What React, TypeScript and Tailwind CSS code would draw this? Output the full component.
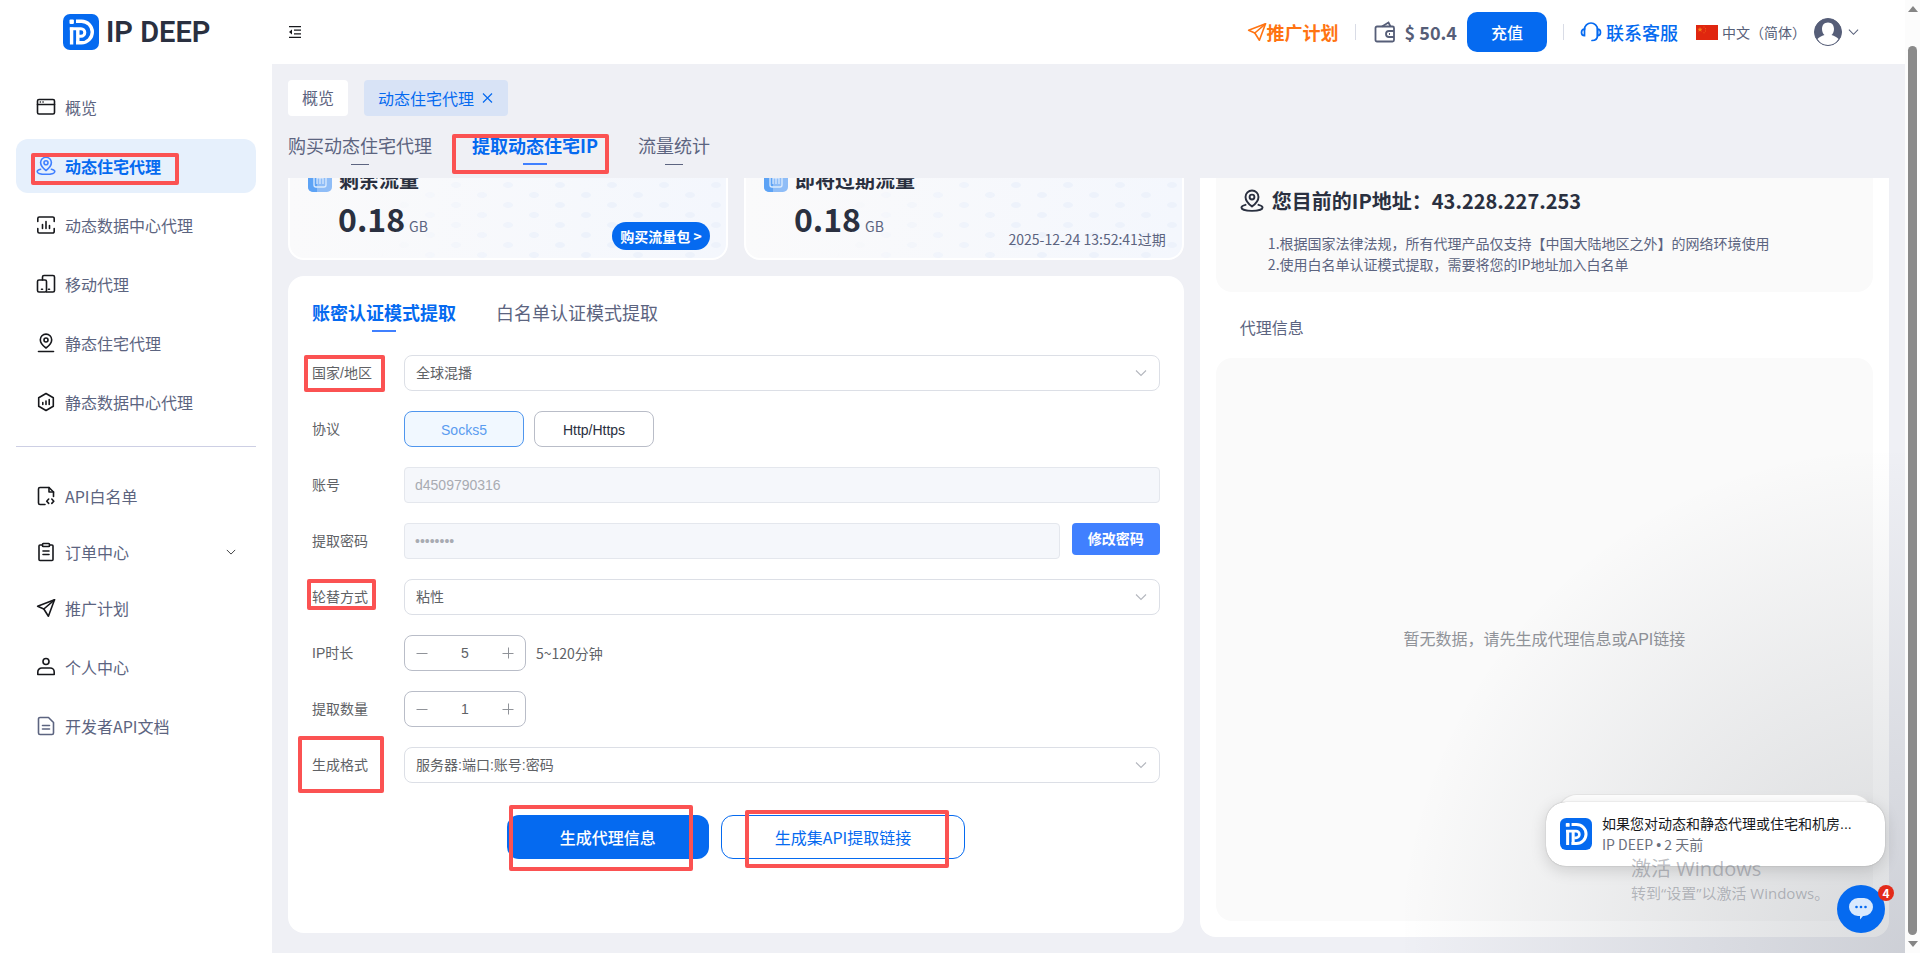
import { useState } from "react";
import type { ReactNode } from "react";

type IconProps = { className?: string };

type NavItem = {
  name: string;
  icon: ReactNode;
  active?: boolean;
  children?: boolean;
};

function LogoMark({ className }: IconProps) {
  return (
    <svg viewBox="0 0 36 36" className={className} fill="none" aria-hidden="true">
      <rect width="36" height="36" rx="7" fill="#056af0" />
      <rect x="6.500" y="5.500" width="4.400" height="4.400" rx="1" fill="#fff" />
      <path d="M13 7.200h5.500a10.800 10.800 0 0 1 0 21.600H13" stroke="#fff" strokeWidth="3.400" />
      <path d="M6.800 14.700H18a3.800 3.800 0 0 1 0 7.600h-2" stroke="#fff" strokeWidth="3" />
      <path d="M8.600 13.500v17M14.800 14v16" stroke="#fff" strokeWidth="3.400" />
    </svg>
  );
}

function Icon({ children, className = "size-5" }: { children: ReactNode; className?: string }) {
  return (
    <svg
      viewBox="0 0 20 20"
      className={className}
      fill="none"
      stroke="currentColor"
      strokeWidth="1.6"
      strokeLinecap="round"
      strokeLinejoin="round"
      aria-hidden="true"
    >
      {children}
    </svg>
  );
}

function PinIcon({ className }: IconProps) {
  return (
    <Icon className={className}>
      <path d="M10 14.500S4.600 10.600 4.600 6.600a5.400 5.400 0 0 1 10.800 0c0 4-5.400 7.900-5.400 7.900Z" />
      <circle cx="10" cy="6.700" r="2" />
      <path d="M4.600 13.200c-2.200.5-3.400 1.300-3.400 2.200 0 1.700 3.900 2.800 8.800 2.800s8.800-1.100 8.800-2.800c0-.9-1.200-1.700-3.400-2.200" />
    </Icon>
  );
}

function PlaneIcon({ className }: IconProps) {
  return (
    <Icon className={className}>
      <path d="M18.500 1.800 1.600 8.300l6.200 2.700 4.600 7.200Z" />
      <path d="M18.500 1.800 7.800 11" />
    </Icon>
  );
}

function Chevron({ className = "h-2 w-3" }: IconProps) {
  return (
    <svg viewBox="0 0 12 8" className={className} fill="none" stroke="currentColor" strokeWidth="1.100" aria-hidden="true">
      <path d="m1 1.500 5 5 5-5" />
    </svg>
  );
}

// red frame that highlights a step of the tutorial
function Mark({ className }: { className: string }) {
  return <span className={`pointer-events-none absolute z-10 rounded-[2px] border-4 border-[#fb5252] ${className}`} />;
}

const mainNav: NavItem[] = [
  {
    name: "概览",
    icon: (
      <Icon>
        <rect x="1.500" y="2.500" width="17" height="14.500" rx="1.500" />
        <path d="M1.500 7.500h17M4.300 5h.1M7 5h.1" />
      </Icon>
    ),
  },
  { name: "动态住宅代理", icon: <PinIcon className="size-5" />, active: true },
  {
    name: "动态数据中心代理",
    icon: (
      <Icon>
        <path d="M1.800 6.500v-3a1.500 1.500 0 0 1 1.500-1.500h13.400a1.500 1.500 0 0 1 1.500 1.500v3M1.800 13.500v3A1.500 1.500 0 0 0 3.300 18h13.400a1.500 1.500 0 0 0 1.500-1.500v-3M6.500 9.500v4M10 6.500v7M13.500 10.500v3" />
      </Icon>
    ),
  },
  {
    name: "移动代理",
    icon: (
      <Icon>
        <path d="M6.500 6V3A1.500 1.500 0 0 1 8 1.500h9A1.500 1.500 0 0 1 18.500 3v13.500A1.500 1.500 0 0 1 17 18h-6.500" />
        <rect x="1.500" y="6" width="9" height="12" rx="1.500" />
        <path d="M5.500 15.200h1M12.500 15.200h1" />
      </Icon>
    ),
  },
  {
    name: "静态住宅代理",
    icon: (
      <Icon>
        <path d="M10 15S4.300 11 4.300 6.800a5.700 5.700 0 0 1 11.400 0C15.700 11 10 15 10 15Z" />
        <circle cx="10" cy="7" r="2" />
        <path d="M2.500 18.500h15" />
      </Icon>
    ),
  },
  {
    name: "静态数据中心代理",
    icon: (
      <Icon>
        <path d="m10 1.500 7.300 4.200v8.600L10 18.500l-7.300-4.200V5.700Z" />
        <path d="M6.800 10.500v2M10 9v3.500M13.200 7.500v5" />
      </Icon>
    ),
  },
];

const subNav: NavItem[] = [
  {
    name: "API白名单",
    icon: (
      <Icon>
        <path d="M9 18.500H4A1.500 1.500 0 0 1 2.500 17V3A1.500 1.500 0 0 1 4 1.500h9L17.500 6v4.500" />
        <path d="M13 1.500V6h4.500M12.700 13l-2 2.200 2 2.200M15.800 13l2 2.200-2 2.200" />
      </Icon>
    ),
  },
  {
    name: "订单中心",
    children: true,
    icon: (
      <Icon>
        <path d="M6.500 3H4a1 1 0 0 0-1 1v13.500a1 1 0 0 0 1 1h12a1 1 0 0 0 1-1V4a1 1 0 0 0-1-1h-2.500" />
        <rect x="6.500" y="1.500" width="7" height="3" rx=".8" />
        <path d="M7 9h6M7 12.500h6" />
      </Icon>
    ),
  },
  { name: "推广计划", icon: <PlaneIcon className="size-5" /> },
  {
    name: "个人中心",
    icon: (
      <Icon>
        <circle cx="10" cy="4.500" r="3" />
        <path d="M1.800 17.500v-2.500a4 4 0 0 1 4-4h8.400a4 4 0 0 1 4 4v2.500Z" />
      </Icon>
    ),
  },
  {
    name: "开发者API文档",
    icon: (
      <Icon className="size-5 text-[#5c6480]">
        <path d="M12.500 1.500H4A1.500 1.500 0 0 0 2.500 3v14A1.500 1.500 0 0 0 4 18.500h12a1.500 1.500 0 0 0 1.500-1.500V6.500Z" />
        <path d="M6.500 9.500h7M6.500 13h7" />
      </Icon>
    ),
  },
];

function NavLink({ item }: { item: NavItem }) {
  return (
    <a
      href="#"
      className={`relative flex items-center rounded-xl px-5 text-base ${item.children ? "h-12" : "h-[54px]"} ${
        item.active ? "bg-[#e6f0fc] font-bold text-[#056af0]" : "text-[#5c6480]"
      }`}
    >
      <span className={item.active ? "text-[#4080ff]" : "text-[#17181c]"}>{item.icon}</span>
      <span className="ml-[9px]">{item.name}</span>
      {item.children && <Chevron className="ml-auto h-2 w-[10px] text-[#303133]" />}
      {item.active && <Mark className="top-[14px] left-[15px] h-8 w-[148px]" />}
    </a>
  );
}

function Sidebar() {
  return (
    <aside className="flex w-[272px] shrink-0 flex-col bg-white px-4">
      <a href="#" className="flex h-16 items-center gap-[7px] pl-[47px]">
        <LogoMark className="size-9" />
        <span className="font-['Roboto',sans-serif] text-[29px] leading-9 font-semibold text-[#2a3040]">IP DEEP</span>
      </a>
      <nav className="mt-4 flex flex-col gap-[5px]">
        {mainNav.map((item) => (
          <NavLink key={item.name} item={item} />
        ))}
      </nav>
      <hr className="mt-[17px] mb-[22px] border-[#cdcfe4]" />
      <nav className="flex flex-col gap-[5px]">
        {subNav.map((item) => (
          <NavLink key={item.name} item={item} />
        ))}
      </nav>
    </aside>
  );
}

function Header() {
  return (
    <header className="flex h-16 shrink-0 items-center bg-white pr-[46px] pl-4">
      <button type="button" aria-label="收起菜单" className="text-[#17181c]">
        <svg viewBox="0 0 14 14" className="size-[14px]" fill="none" stroke="currentColor" strokeWidth="1.200">
          <path d="M1 1.600h12M6 5.200h7M6 8.800h7M1 12.400h12" />
          <path d="M4 4.600v4.800L1 7Z" fill="currentColor" stroke="none" />
        </svg>
      </button>
      <a href="#" className="ml-auto flex items-center text-lg font-bold text-[#ff7412]">
        <PlaneIcon className="size-5" />
        推广计划
      </a>
      <span className="mr-[18px] ml-4 h-4 w-px bg-[#d9dce6]" />
      <svg viewBox="0 0 22 22" className="size-[22px] text-[#565e78]" fill="none" stroke="currentColor" strokeWidth="1.800" aria-hidden="true">
        <rect x="1.500" y="5.500" width="18.500" height="15" rx="1.500" />
        <path d="m8 5.500 6.500-4 2 4M20 10h-5a3 3 0 0 0 0 6h5M15 13h1" />
      </svg>
      <span className="ml-[9px] text-lg font-bold text-[#565e78]">$ 50.4</span>
      <button type="button" className="ml-[10px] h-10 w-20 rounded-[10px] bg-[#056af0] text-base font-medium text-white">
        充值
      </button>
      <span className="mx-4 h-4 w-px bg-[#d9dce6]" />
      <a href="#" className="flex items-center gap-1 text-lg font-medium text-[#056af0]">
        <svg viewBox="0 0 22 22" className="size-[22px]" fill="none" stroke="currentColor" strokeWidth="1.700" strokeLinecap="round" aria-hidden="true">
          <path d="M4.500 8.500a6.500 6.500 0 0 1 13 0v6c0 3-2 5-5.500 5" />
          <path d="M4.500 8.200c-2 0-3 1.300-3 3.200s1 3.200 3 3.200ZM17.500 8.200c2 0 3 1.300 3 3.200s-1 3.200-3 3.200Z" />
        </svg>
        联系客服
      </a>
      <button type="button" className="ml-[18px] flex items-center gap-1 text-sm text-[#565e78]">
        <svg viewBox="0 0 22 15" className="h-[15px] w-[22px]" aria-hidden="true">
          <rect width="22" height="15" fill="#e0260f" />
          <path d="m4 2 .7 1.700 1.800.1-1.400 1.200.5 1.800L4 5.800 2.400 6.800l.5-1.800L1.500 3.800l1.800-.1Z" fill="#f5801a" />
          <path d="M7.500 1.500h1v1h-1zM9 3.200h1v1H9zM9 5.500h1v1H9zM7.500 7.200h1v1h-1z" fill="#f0601a" />
        </svg>
        中文（简体）
      </button>
      <button type="button" aria-label="账户" className="ml-2 flex items-center gap-[6px] text-[#565e78]">
        <svg viewBox="0 0 28 28" className="size-7" aria-hidden="true">
          <circle cx="14" cy="14" r="13.500" fill="#565e78" stroke="#565e78" />
          <path d="M14 4.500c-3.900 0-6 2.800-6 6.500 0 2.600 1 4.800 2.500 6-3 1-5.500 2.300-7 4A13 13 0 0 0 14 27a13 13 0 0 0 10.500-6c-1.500-1.700-4-3-7-4 1.500-1.200 2.500-3.400 2.500-6 0-3.700-2.100-6.500-6-6.500Z" fill="#fff" />
        </svg>
        <Chevron className="h-2 w-[11px]" />
      </button>
    </header>
  );
}

function PageTabs() {
  return (
    <>
      <div className="flex gap-4 pt-4 text-base">
        <a href="#" className="flex h-9 items-center rounded bg-white px-[14px] pb-[2px] text-[#5c6480]">
          概览
        </a>
        <div className="flex h-9 items-center gap-2 rounded bg-[#d8e3f6] px-[14px] text-[#056af0]">
          <a href="#">动态住宅代理</a>
          <button type="button" aria-label="关闭">
            <svg viewBox="0 0 12 10" className="h-[10px] w-3" fill="none" stroke="currentColor" strokeWidth="1.200">
              <path d="m1 .5 9 9M10 .5l-9 9" />
            </svg>
          </button>
        </div>
      </div>
      <nav className="flex h-[62px] gap-10 pt-[15px] text-lg leading-7 text-[#5c6480]">
        <a href="#" className="flex flex-col items-center gap-[5px]">
          购买动态住宅代理
          <span className="h-px w-[18px] bg-[#5c6480]" />
        </a>
        <a href="#" className="relative flex flex-col items-center gap-1 font-bold text-[#056af0]">
          提取动态住宅IP
          <span className="h-[2px] w-6 bg-[#4080ff]" />
          <Mark className="top-[3px] -right-[11px] -left-5 h-10" />
        </a>
        <a href="#" className="flex flex-col items-center gap-[5px]">
          流量统计
          <span className="h-px w-[18px] bg-[#5c6480]" />
        </a>
      </nav>
    </>
  );
}

function CardDots({ id }: { id: string }) {
  return (
    <svg className="absolute inset-0 size-full" aria-hidden="true">
      <defs>
        <pattern id={id} width="52" height="20" patternUnits="userSpaceOnUse">
          <ellipse cx="10" cy="5" rx="5" ry="3" fill="#edf2fb" />
          <ellipse cx="36" cy="15" rx="5" ry="3" fill="#edf2fb" />
        </pattern>
        <linearGradient id={`${id}-fade`}>
          <stop offset=".2" stopColor="#fff" stopOpacity="0" />
          <stop offset=".6" stopColor="#fff" />
        </linearGradient>
        <mask id={`${id}-mask`}>
          <rect width="100%" height="100%" fill={`url(#${id}-fade)`} />
        </mask>
      </defs>
      <rect width="100%" height="100%" fill={`url(#${id})`} mask={`url(#${id}-mask)`} />
    </svg>
  );
}

function TrafficCard({ id, title, amount, children }: { id: string; title: string; amount: string; children: ReactNode }) {
  return (
    <section className="relative flex h-[122px] flex-1 flex-col overflow-hidden rounded-2xl border-2 border-white bg-linear-to-r from-[#fafafb] to-[#f4f7fd] px-[18px] pt-[26px]">
      <CardDots id={id} />
      <div className="relative flex items-center gap-[7px]">
        <svg viewBox="0 0 24 24" className="size-6" fill="none" aria-hidden="true">
          <rect width="24" height="24" rx="5" fill="#8fbdf7" />
          <path d="M0 5a5 5 0 0 1 5-5h4v24H5a5 5 0 0 1-5-5Z" fill="#5da3f5" />
          <rect x="6" y="6" width="12" height="13" rx="2" stroke="#dcebfd" strokeWidth="1.300" />
          <path d="M9 10v6M12 10v6M15 10v6M9 10h6" stroke="#dcebfd" strokeWidth="1.200" />
        </svg>
        <h2 className="text-xl leading-7 font-bold text-[#2a3040]">{title}</h2>
      </div>
      <p className="relative ml-[30px] flex items-baseline gap-1 leading-[48px]">
        <span className="text-[32px] font-bold text-[#2a3040]">{amount}</span>
        <span className="text-sm text-[#5c6480]">GB</span>
      </p>
      {children}
    </section>
  );
}

const fieldClass = "h-9 w-full min-w-0 border text-sm outline-none";
const disabledClass = "rounded border-[#e4e7ed] bg-[#f5f7fb] px-[10px] text-[#a8abb2]";

function FormRow({ label, htmlFor, mark, children }: { label: string; htmlFor: string; mark?: string; children: ReactNode }) {
  return (
    <div className="flex">
      <div className="relative w-[92px] shrink-0">
        <label htmlFor={htmlFor} className="text-sm leading-9 text-[#606266]">
          {label}
        </label>
        {mark && <Mark className={mark} />}
      </div>
      <div className="flex min-w-0 flex-1">{children}</div>
    </div>
  );
}

function SelectField({ id, options }: { id: string; options: string[] }) {
  return (
    <div className="relative w-full">
      <select id={id} className={`${fieldClass} appearance-none rounded-lg border-[#dcdfe6] bg-white px-[11px] text-[#606266]`}>
        {options.map((option) => (
          <option key={option}>{option}</option>
        ))}
      </select>
      <Chevron className="pointer-events-none absolute top-[14px] right-[13px] h-2 w-3 text-[#b4b7be]" />
    </div>
  );
}

function Stepper({ id, value, min, max, onChange }: { id: string; value: number; min: number; max: number; onChange: (value: number) => void }) {
  return (
    <div className="flex h-9 w-[122px] items-center rounded-lg border border-[#b9bdc8] px-[11px] text-[#909399]">
      <button type="button" aria-label="减少" onClick={() => onChange(Math.max(min, value - 1))}>
        <svg viewBox="0 0 12 12" className="size-3" stroke="currentColor">
          <path d="M.5 6.500h11" />
        </svg>
      </button>
      <input
        id={id}
        value={value}
        onChange={(e) => onChange(Math.min(max, Number(e.target.value) || min))}
        className="w-full min-w-0 text-center text-sm text-[#606266] outline-none"
      />
      <button type="button" aria-label="增加" onClick={() => onChange(Math.min(max, value + 1))}>
        <svg viewBox="0 0 12 12" className="size-3" stroke="currentColor">
          <path d="M.5 6.500h11M6.500.5v11" />
        </svg>
      </button>
    </div>
  );
}

function ExtractForm() {
  const [protocol, setProtocol] = useState("Socks5");
  const [duration, setDuration] = useState(5);
  const [count, setCount] = useState(1);

  return (
    <section className="mt-4 rounded-2xl bg-white px-6 pt-[22px] pb-[74px]">
      <nav className="flex gap-10 text-lg leading-7 text-[#5c6480]">
        <a href="#" className="flex flex-col items-center gap-1 font-bold text-[#056af0]">
          账密认证模式提取
          <span className="h-[2px] w-6 bg-[#4080ff]" />
        </a>
        <a href="#">白名单认证模式提取</a>
      </nav>

      <form className="mt-[23px] flex flex-col gap-5 font-['Liberation_Sans','Noto_Sans_CJK_SC',sans-serif]" onSubmit={(e) => e.preventDefault()}>
        <FormRow label="国家/地区" htmlFor="country" mark="-left-2 top-0 h-[37px] w-[81px]">
          <SelectField id="country" options={["全球混播"]} />
        </FormRow>

        <FormRow label="协议" htmlFor="socks5">
          <div className="flex gap-[10px]">
            {["Socks5", "Http/Https"].map((name) => (
              <button
                key={name}
                id={name.toLowerCase()}
                type="button"
                onClick={() => setProtocol(name)}
                className={`h-9 w-[120px] rounded-lg border pt-px text-sm ${
                  protocol === name ? "border-[#4f96ee] bg-[#f1f8ff] text-[#5a9cf0]" : "border-[#b9bdc8] bg-white text-[#2a3040]"
                }`}
              >
                {name}
              </button>
            ))}
          </div>
        </FormRow>

        <FormRow label="账号" htmlFor="account">
          <input id="account" disabled defaultValue="d4509790316" className={`${fieldClass} ${disabledClass}`} />
        </FormRow>

        <FormRow label="提取密码" htmlFor="password">
          <input id="password" type="password" disabled defaultValue="12345678" className={`${fieldClass} ${disabledClass}`} />
          <button type="button" className="ml-3 h-8 w-[88px] shrink-0 rounded bg-[#4080ff] text-sm font-bold text-white">
            修改密码
          </button>
        </FormRow>

        <FormRow label="轮替方式" htmlFor="rotation" mark="-left-[5px] top-0 h-[31px] w-[69px]">
          <SelectField id="rotation" options={["粘性"]} />
        </FormRow>

        <FormRow label="IP时长" htmlFor="duration">
          <Stepper id="duration" value={duration} min={5} max={120} onChange={setDuration} />
          <span className="ml-[10px] font-['Noto_Sans_CJK_SC',sans-serif] text-sm leading-9 text-[#606266]">5~120分钟</span>
        </FormRow>

        <FormRow label="提取数量" htmlFor="count">
          <Stepper id="count" value={count} min={1} max={1000} onChange={setCount} />
        </FormRow>

        <FormRow label="生成格式" htmlFor="format" mark="-left-[14px] -top-[11px] h-[57px] w-[86px]">
          <SelectField id="format" options={["服务器:端口:账号:密码"]} />
        </FormRow>

        <div className="mt-3 flex justify-center gap-3 font-['Noto_Sans_CJK_SC',sans-serif] text-base">
          <button type="submit" className="relative h-11 rounded-xl bg-[#056af0] px-[53px] font-medium text-white">
            生成代理信息
            <Mark className="-top-[10px] left-[2px] h-[66px] w-[184px]" />
          </button>
          <button type="button" className="relative h-11 rounded-xl border border-[#056af0] bg-white px-[53px] text-[#056af0]">
            生成集API提取链接
            <Mark className="-top-[6px] left-[23px] h-[58px] w-[204px]" />
          </button>
        </div>
      </form>
    </section>
  );
}

function InfoPanel() {
  return (
    <aside className="-mt-4 mb-4 flex min-w-0 flex-col rounded-2xl bg-white p-4">
      <section className="rounded-b-2xl bg-[#fafafa] px-6 pt-1 pb-[17px]">
        <h2 className="flex items-center gap-2 pt-[3px] text-xl leading-8 font-bold text-[#2a3040]">
          <PinIcon className="size-6" />
          您目前的IP地址：43.228.227.253
        </h2>
        <ol className="mt-4 ml-7 text-sm leading-[21px] text-[#5c6480]">
          <li>1.根据国家法律法规，所有代理产品仅支持【中国大陆地区之外】的网络环境使用</li>
          <li>2.使用白名单认证模式提取，需要将您的IP地址加入白名单</li>
        </ol>
      </section>
      <h3 className="mt-[23px] ml-6 text-base leading-6 text-[#5c6480]">代理信息</h3>
      <div className="mt-[19px] flex flex-1 items-center justify-center rounded-2xl bg-[#fafafa]">
        <p className="font-['Liberation_Sans','Noto_Sans_CJK_SC',sans-serif] text-base text-[#909399]">暂无数据，请先生成代理信息或API链接</p>
      </div>
    </aside>
  );
}

function ChatWidget() {
  return (
    <div className="pointer-events-none absolute right-0 bottom-0 size-[500px] bg-[radial-gradient(ellipse_at_bottom_right,rgba(29,39,54,0.16)_0%,rgba(29,39,54,0)_72%)]">
      <div className="absolute right-8 bottom-[101px] h-[58px] w-[316px] rounded-[20px] border border-black/10 bg-white" />
      <a
        href="#"
        className="pointer-events-auto absolute right-5 bottom-[87px] flex h-16 w-[339px] items-center gap-[10px] rounded-[20px] bg-white pl-[14px] font-['Liberation_Sans','Noto_Sans_CJK_SC',sans-serif] text-sm leading-5 shadow-[0_0_1px_rgba(0,0,0,0.4),0_4px_16px_rgba(0,0,0,0.15)]"
      >
        <LogoMark className="size-8 shrink-0" />
        <span className="whitespace-nowrap">
          <span className="block text-[#17181c]">如果您对动态和静态代理或住宅和机房...</span>
          <span className="block font-['Noto_Sans_CJK_SC',sans-serif] text-[#6c707b]">
            IP DEEP <span className="font-['Liberation_Sans',sans-serif]">•</span> 2 天前
          </span>
        </span>
      </a>
      <div className="absolute right-[70px] bottom-12 w-[204px] font-['Open_Sans','Noto_Sans_CJK_SC',sans-serif] whitespace-nowrap text-[#6c707b]/45">
        <p className="text-xl leading-6">激活 Windows</p>
        <p className="text-[15px] leading-6">转到“设置”以激活 Windows。</p>
      </div>
      <button
        type="button"
        aria-label="打开聊天"
        className="pointer-events-auto absolute right-5 bottom-5 flex size-12 items-center justify-center rounded-full bg-[#056af0]"
      >
        <svg viewBox="0 0 24 22" className="h-[22px] w-6" aria-hidden="true">
          <path d="M9 0h6a9 9 0 0 1 0 18h-1l-3 3.500V18H9A9 9 0 0 1 9 0Z" fill="#d9e9fd" />
          <circle cx="7.500" cy="9" r="1.300" fill="#056af0" />
          <circle cx="12" cy="9" r="1.300" fill="#056af0" />
          <circle cx="16.500" cy="9" r="1.300" fill="#056af0" />
        </svg>
        <span className="absolute top-0 -right-[9px] flex size-4 items-center justify-center rounded-full bg-[#e32b1a] text-xs font-bold text-white">4</span>
      </button>
    </div>
  );
}

function ScrollTrack() {
  return (
    <div className="flex w-[15px] shrink-0 flex-col items-center bg-[#fcfcfc] py-[6px]" aria-hidden="true">
      <svg viewBox="0 0 10 6" className="h-[6px] w-[10px]">
        <path d="M5 0 10 6H0Z" fill="#858585" />
      </svg>
      <span className="mt-[34px] mb-[6px] w-[9px] flex-1 rounded-full bg-[#8a8a8a]" />
      <svg viewBox="0 0 10 6" className="h-[6px] w-[10px]">
        <path d="M5 6 10 0H0Z" fill="#858585" />
      </svg>
    </div>
  );
}

export default function App() {
  return (
    <div className="flex h-screen overflow-hidden bg-[#eff0f5] font-['Noto_Sans_CJK_SC',sans-serif]">
      <Sidebar />
      <div className="relative flex min-w-0 flex-1 flex-col">
        <Header />
        <main className="flex min-h-0 flex-1 flex-col px-4">
          <PageTabs />
          <div className="grid min-h-0 flex-1 grid-cols-[13fr_10fr] gap-4 overflow-hidden">
            <div className="-mt-10 min-w-0">
              <div className="flex gap-4">
                <TrafficCard id="dots-left" title="剩余流量" amount="0.18">
                  <button type="button" className="absolute right-4 bottom-2 h-7 w-[98px] rounded-full bg-[#056af0] text-sm font-bold text-white">
                    购买流量包 &gt;
                  </button>
                </TrafficCard>
                <TrafficCard id="dots-right" title="即将过期流量" amount="0.18">
                  <p className="absolute right-4 bottom-[9px] text-sm leading-5 text-[#5c6480]">2025-12-24 13:52:41过期</p>
                </TrafficCard>
              </div>
              <ExtractForm />
            </div>
            <InfoPanel />
          </div>
        </main>
        <ChatWidget />
      </div>
      <ScrollTrack />
    </div>
  );
}
